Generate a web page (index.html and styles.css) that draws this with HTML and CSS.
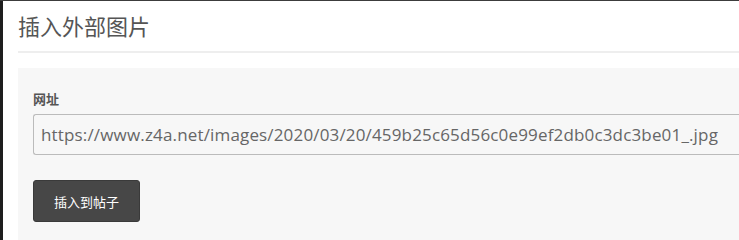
FILE: index.html
```html
<!DOCTYPE html>
<html lang="zh">
<head>
<meta charset="utf-8">
<link rel="stylesheet" href="styles.css">
</head>
<body>
<div class="topbar"></div>
<div class="dialog">
  <div class="dialog-head">
    <h1 class="dialog-title">插入外部图片</h1>
  </div>
  <div class="panel">
    <label class="field-label">网址</label>
    <div class="field-input">https://www.z4a.net/images/2020/03/20/459b25c65d56c0e99ef2db0c3dc3be01_.jpg</div>
    <button class="btn">插入到帖子</button>
  </div>
</div>
</body>
</html>
```

FILE: styles.css
```css
html, body {
  margin: 0;
  padding: 0;
  height: 100%;
  overflow: hidden;
}
body {
  background: #1e1e1e;
  font-family: "Open Sans", "Noto Sans CJK SC", sans-serif;
  display: flex;
  flex-direction: column;
}
.topbar {
  height: 1px;
  flex: none;
  background: #3c3c3c;
}
.dialog {
  flex: 1;
  margin-left: 3px;
  background: #ffffff;
  padding-left: 15px;
  display: flex;
  flex-direction: column;
  min-height: 0;
}
.dialog-head {
  height: 50px;
  flex: none;
  border-bottom: 2px solid #eeeeee;
  display: flex;
  align-items: flex-start;
}
.dialog-title {
  margin: 0;
  padding-top: 9px;
  font-size: 22px;
  line-height: 32px;
  font-weight: normal;
  color: #555555;
  white-space: nowrap;
}
.panel {
  margin-top: 15px;
  background: #f7f7f7;
  flex: 1;
  padding: 23px 0 0 15px;
  display: flex;
  flex-direction: column;
  align-items: flex-start;
}
.field-label {
  font-size: 13px;
  line-height: 16px;
  font-weight: bold;
  color: #555555;
}
.field-input {
  margin-top: 7px;
  box-sizing: border-box;
  width: 720px;
  height: 41px;
  border: 1px solid #bbbbbb;
  border-right: none;
  border-radius: 3px 0 0 3px;
  padding: 0 0 0 7px;
  font-size: 17px;
  letter-spacing: 0.16px;
  line-height: 39px;
  color: #666666;
  white-space: nowrap;
  overflow: hidden;
}
.btn {
  margin-top: 25px;
  flex: none;
  width: 107px;
  height: 42px;
  background: #474747;
  border: 1px solid #3a3a3a;
  border-radius: 3px;
  color: #ffffff;
  font-family: "Noto Sans CJK SC", sans-serif;
  font-size: 13px;
  padding: 0;
}
```
